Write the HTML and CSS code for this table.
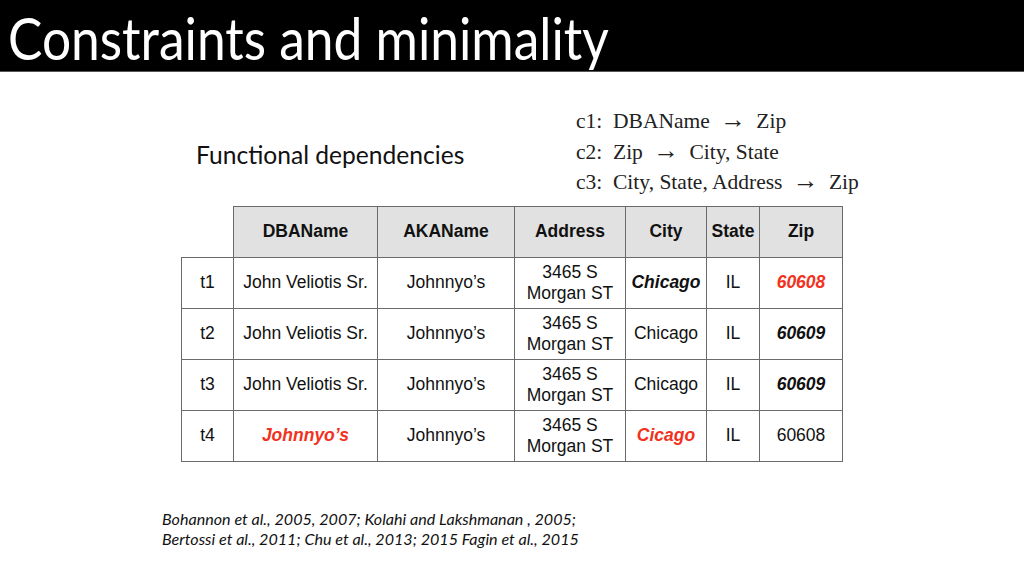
FILE: index.html
```html
<!DOCTYPE html>
<html lang="en">
<head>
<meta charset="utf-8">
<title>Constraints and minimality</title>
<link rel="stylesheet" href="styles.css">
</head>
<body>
<header class="title-bar">
  <h1 class="title">Constraints and minimality</h1>
</header>
<main class="slide">
  <section class="top-row">
    <p class="fd-label">Functional dependencies</p>
    <div class="constraints">
      <div class="c-line">c1:&nbsp; DBAName <span class="arrow">→</span> Zip</div>
      <div class="c-line">c2:&nbsp; Zip <span class="arrow">→</span> City, State</div>
      <div class="c-line">c3:&nbsp; City, State, Address <span class="arrow">→</span> Zip</div>
    </div>
  </section>
  <table class="data">
    <thead>
      <tr>
        <th class="corner"></th>
        <th class="w-dba">DBAName</th>
        <th class="w-aka">AKAName</th>
        <th class="w-addr">Address</th>
        <th class="w-city">City</th>
        <th class="w-state">State</th>
        <th class="w-zip">Zip</th>
      </tr>
    </thead>
    <tbody>
      <tr>
        <td class="tid">t1</td>
        <td>John Veliotis Sr.</td>
        <td>Johnnyo’s</td>
        <td>3465 S<br>Morgan ST</td>
        <td class="em">Chicago</td>
        <td>IL</td>
        <td class="em red">60608</td>
      </tr>
      <tr>
        <td class="tid">t2</td>
        <td>John Veliotis Sr.</td>
        <td>Johnnyo’s</td>
        <td>3465 S<br>Morgan ST</td>
        <td>Chicago</td>
        <td>IL</td>
        <td class="em">60609</td>
      </tr>
      <tr>
        <td class="tid">t3</td>
        <td>John Veliotis Sr.</td>
        <td>Johnnyo’s</td>
        <td>3465 S<br>Morgan ST</td>
        <td>Chicago</td>
        <td>IL</td>
        <td class="em">60609</td>
      </tr>
      <tr>
        <td class="tid">t4</td>
        <td class="em red">Johnnyo’s</td>
        <td>Johnnyo’s</td>
        <td>3465 S<br>Morgan ST</td>
        <td class="em red">Cicago</td>
        <td>IL</td>
        <td>60608</td>
      </tr>
    </tbody>
  </table>
  <p class="cite">Bohannon et al., 2005, 2007; Kolahi and Lakshmanan , 2005;<br>Bertossi et al., 2011; Chu et al., 2013; 2015 Fagin et al., 2015</p>
</main>
</body>
</html>
```
FILE: styles.css
```css
html, body {
  margin: 0;
  padding: 0;
  background: #ffffff;
}
body {
  width: 1024px;
  height: 575px;
  overflow: hidden;
  font-family: Lato, "Open Sans", sans-serif;
  color: #111;
}
.title-bar {
  background: #000;
  height: 72px;
  border-bottom: 1px solid #555;
  box-sizing: border-box;
  display: flex;
  align-items: center;
  padding-left: 8px;
}
.title {
  margin: 0;
  color: #fff;
  font-family: Lato, sans-serif;
  font-weight: 400;
  font-size: 51.5px;
  line-height: 1;
  padding-top: 4px;
  transform: scaleY(1.14);
}
.slide {
  display: flex;
  flex-direction: column;
  align-items: flex-start;
}
.top-row {
  display: flex;
  align-items: center;
  margin-top: 34px;
  padding-left: 196px;
}
.fd-label {
  margin: 6px 0 0 0;
  width: 380px;
  font-size: 24.6px;
  color: #111;
}
.constraints {
  font-family: "Liberation Serif", "DejaVu Serif", serif;
  font-size: 21.5px;
  line-height: 30.5px;
  color: #222;
}
.arrow {
  display: inline-block;
  margin: 0 5px;
  font-size: 1.2em;
  line-height: 1;
}
.data {
  margin: 8px 0 0 181px;
  border-collapse: collapse;
  font-family: "Liberation Sans", Arial, sans-serif;
  font-size: 17.5px;
  color: #111;
}
.data th, .data td {
  border: 1px solid #6a6a6a;
  height: 51px;
  padding: 0;
  text-align: center;
  line-height: 21px;
  box-sizing: border-box;
}
.data th {
  background: #e1e1e1;
  font-weight: 700;
}
.data th.corner {
  background: transparent;
  border-top: none;
  border-left: none;
  width: 52px;
}
.w-dba { width: 144px; }
.w-aka { width: 137px; }
.w-addr { width: 111px; }
.w-city { width: 81px; }
.w-state { width: 53px; }
.w-zip { width: 83px; }
.data td.em {
  font-weight: 700;
  font-style: italic;
}
.data td.red {
  color: #f2321d;
}
.cite {
  margin: 47px 0 0 162px;
  font-style: italic;
  font-size: 16.1px;
  line-height: 20.5px;
  color: #111;
}
```
